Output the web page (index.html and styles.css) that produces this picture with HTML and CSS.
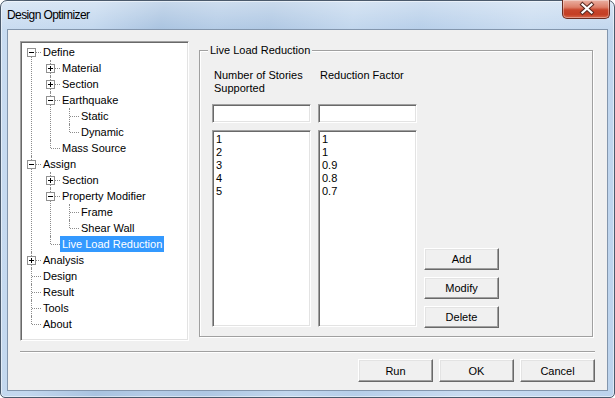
FILE: index.html
```html
<!DOCTYPE html>
<html lang="en">
<head>
    <meta charset="UTF-8">
    <title>Design Optimizer</title>
    <link rel="stylesheet" href="styles.css">
</head>
<body>

<div class="window">
    <div class="titlebar">
        <span class="title">Design Optimizer</span>
        <div class="close">
            <svg width="48" height="19" viewBox="0 0 48 19">
                <path d="M19.5 5.5 L28.5 13.5 M28.5 5.5 L19.5 13.5" stroke="#5a2a22" stroke-width="4.2" stroke-linecap="square"/>
                <path d="M19.5 5.5 L28.5 13.5 M28.5 5.5 L19.5 13.5" stroke="#ffffff" stroke-width="2.2" stroke-linecap="square"/>
            </svg>
        </div>
    </div>

    <div class="client">
        <div class="main">
            <div class="tree">
                <ul>
                    <li><div class="row"><i class="tg"></i><span>Define</span></div>
                        <ul>
                            <li><div class="row"><i class="tg plus"></i><span>Material</span></div></li>
                            <li><div class="row"><i class="tg plus"></i><span>Section</span></div></li>
                            <li><div class="row"><i class="tg"></i><span>Earthquake</span></div>
                                <ul>
                                    <li><div class="row"><span>Static</span></div></li>
                                    <li><div class="row"><span>Dynamic</span></div></li>
                                </ul>
                            </li>
                            <li><div class="row"><span>Mass Source</span></div></li>
                        </ul>
                    </li>
                    <li><div class="row"><i class="tg"></i><span>Assign</span></div>
                        <ul>
                            <li><div class="row"><i class="tg plus"></i><span>Section</span></div></li>
                            <li><div class="row"><i class="tg"></i><span>Property Modifier</span></div>
                                <ul>
                                    <li><div class="row"><span>Frame</span></div></li>
                                    <li><div class="row"><span>Shear Wall</span></div></li>
                                </ul>
                            </li>
                            <li><div class="row"><span class="selected">Live Load Reduction</span></div></li>
                        </ul>
                    </li>
                    <li><div class="row"><i class="tg plus"></i><span>Analysis</span></div></li>
                    <li><div class="row"><span>Design</span></div></li>
                    <li><div class="row"><span>Result</span></div></li>
                    <li><div class="row"><span>Tools</span></div></li>
                    <li><div class="row"><span>About</span></div></li>
                </ul>
            </div>

            <div class="group">
                <span class="caption">Live Load Reduction</span>
                <div class="grid">
                    <div class="label">Number of Stories<br>Supported</div>
                    <div class="label">Reduction Factor</div>
                    <div></div>
                    <div class="edit"></div>
                    <div class="edit"></div>
                    <div></div>
                    <div class="list">1<br>2<br>3<br>4<br>5</div>
                    <div class="list">1<br>1<br>0.9<br>0.8<br>0.7</div>
                    <div class="side-buttons">
                        <button class="btn">Add</button>
                        <button class="btn">Modify</button>
                        <button class="btn">Delete</button>
                    </div>
                </div>
            </div>
        </div>

        <div class="sep"></div>

        <div class="footer">
            <button class="btn big">Run</button>
            <button class="btn big">OK</button>
            <button class="btn big">Cancel</button>
        </div>
    </div>
</div>

</body>
</html>
```

FILE: styles.css
```css
body {
    margin: 0;
    background-color: #ffffff;
    font-family: "Liberation Sans", Arial, sans-serif;
    font-size: 11px;
    color: #000000;
}
.window {
    width: 615px;
    height: 398px;
    box-sizing: border-box;
    border: 1px solid #4b5a6c;
    border-radius: 7px 7px 5px 5px;
    padding: 0 6px 6px;
    display: flex;
    flex-direction: column;
    background:
        linear-gradient(to bottom, rgba(255,255,255,0.35), rgba(255,255,255,0) 30px),
        linear-gradient(100deg, #c9dcf1 0%, #c2d7ee 14%, #a9c3e0 24%, #b3cbe6 32%, #aec7e3 40%, #c1d6ed 52%, #b6cee9 62%, #c8dbf0 78%, #bcd3ed 100%);
    box-shadow: inset 0 0 0 1px rgba(255,255,255,0.5);
}
.titlebar {
    height: 28px;
    display: flex;
    justify-content: space-between;
    align-items: flex-start;
}
.title {
    font-size: 12px;
    letter-spacing: -0.6px;
    margin-top: 7px;
    color: #000000;
}
.close {
    width: 48px;
    height: 19px;
    margin-right: -2px;
    margin-top: -1px;
    box-sizing: border-box;
    border: 1px solid #6a2c20;
    border-top: none;
    border-radius: 0 0 5px 5px;
    background: linear-gradient(to bottom, #eab0a2 0%, #dd7f69 40%, #c8452c 55%, #c43f24 80%, #d8684c 100%);
    box-shadow: inset 0 0 0 1px rgba(255,255,255,0.35);
    overflow: hidden;
}
.close svg {
    display: block;
    margin-top: -1px;
}
.client {
    flex: 1;
    border: 1px solid #8396ad;
    background-color: #f0f0f0;
    padding: 11px 12px 8px;
    display: flex;
    flex-direction: column;
}
.main {
    display: flex;
    height: 300px;
}

/* tree view */
.tree {
    width: 169px;
    box-sizing: border-box;
    background-color: #ffffff;
    border: 1px solid;
    border-color: #a0a0a0 #ffffff #ffffff #a0a0a0;
    box-shadow: inset 1px 1px 0 #696969, inset -1px -1px 0 #e3e3e3;
    padding: 2px 1px 1px;
}
.tree ul {
    list-style: none;
    margin: 0;
    padding: 0 0 0 19px;
}
.tree > ul {
    padding: 0;
}
.tree li {
    position: relative;
}
.tree li::before {
    content: '';
    position: absolute;
    left: 9px;
    top: 0;
    bottom: 0;
    border-left: 1px dotted #8c8c8c;
}
.tree li:last-child::before {
    bottom: auto;
    height: 8px;
}
.tree > ul > li:first-child::before {
    top: 8px;
}
.row {
    position: relative;
    display: flex;
    height: 16px;
    padding-left: 19px;
}
.row::before {
    content: '';
    position: absolute;
    left: 10px;
    top: 8px;
    width: 9px;
    border-top: 1px dotted #8c8c8c;
}
.row span {
    line-height: 16px;
    padding: 0 2px;
    white-space: nowrap;
}
.row span.selected {
    background-color: #3399ff;
    color: #ffffff;
}
.tg {
    position: absolute;
    z-index: 1;
    left: 5px;
    top: 4px;
    width: 9px;
    height: 9px;
    box-sizing: border-box;
    border: 1px solid #919191;
    background-color: #ffffff;
}
.tg::before {
    content: '';
    position: absolute;
    left: 1px;
    top: 3px;
    width: 5px;
    height: 1px;
    background-color: #000000;
}
.tg.plus::after {
    content: '';
    position: absolute;
    left: 3px;
    top: 1px;
    width: 1px;
    height: 5px;
    background-color: #000000;
}

/* group box */
.group {
    position: relative;
    flex: 1;
    margin: 9px 2px 4px 10px;
    border: 1px solid #a0a0a0;
    box-shadow: 1px 1px 0 #ffffff, inset 1px 1px 0 #ffffff;
    padding: 18px 12px 9px;
    display: flex;
}
.caption {
    position: absolute;
    top: -7px;
    left: 8px;
    padding: 0 2px;
    line-height: 13px;
    background-color: #f0f0f0;
}
.grid {
    display: grid;
    grid-template-columns: 99px 99px 75px;
    grid-template-rows: auto auto 1fr;
    column-gap: 7px;
    flex: 1;
}
.label {
    line-height: 13px;
    height: 26px;
    padding-left: 2px;
    margin-bottom: 9px;
}
.edit,
.list {
    box-sizing: border-box;
    background-color: #ffffff;
    border: 1px solid;
    border-color: #a0a0a0 #ffffff #ffffff #a0a0a0;
    box-shadow: inset 1px 1px 0 #696969, inset -1px -1px 0 #e3e3e3;
}
.edit {
    height: 19px;
    margin-bottom: 7px;
}
.list {
    padding: 2px 2px 0 3px;
    line-height: 13px;
}
.side-buttons {
    align-self: end;
    display: flex;
    flex-direction: column;
    gap: 7px;
    margin-bottom: -1px;
}

/* buttons */
.btn {
    width: 75px;
    height: 22px;
    padding: 0;
    font-family: inherit;
    font-size: 11px;
    color: #000000;
    background-color: #f0f0f0;
    border: 1px solid;
    border-color: #ffffff #696969 #696969 #ffffff;
    box-shadow: inset -1px -1px 0 #a0a0a0, inset 1px 1px 0 #e3e3e3;
}
.btn.big {
    height: 23px;
}
.sep {
    margin-top: 10px;
    border-top: 1px solid #a0a0a0;
    border-bottom: 1px solid #ffffff;
}
.footer {
    margin-top: 6px;
    display: flex;
    justify-content: flex-end;
    gap: 6px;
}
```
